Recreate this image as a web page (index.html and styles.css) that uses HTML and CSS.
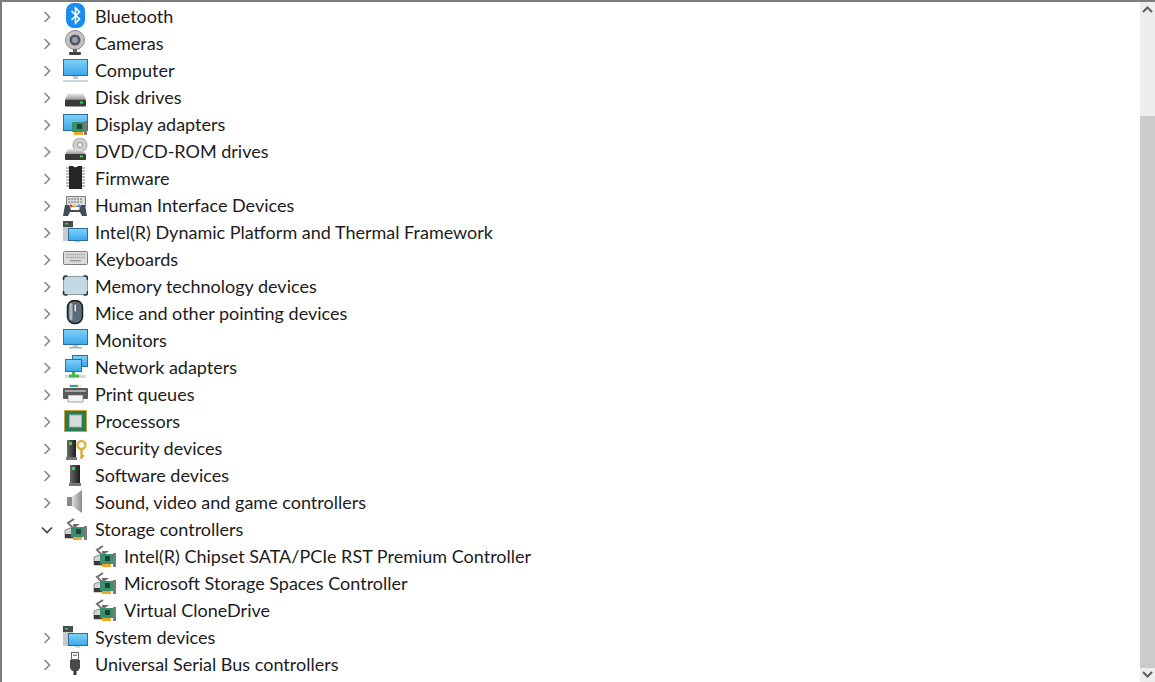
FILE: index.html
```html
<!DOCTYPE html>
<html lang="en">
<head>
<meta charset="utf-8">
<title>Device Manager</title>
<link rel="stylesheet" href="styles.css">
</head>
<body>
<svg class="sprite" width="0" height="0" aria-hidden="true">
  <defs>
    <linearGradient id="sky" x1="0" y1="0" x2="0" y2="1"><stop offset="0" stop-color="#7fd2f7"/><stop offset="1" stop-color="#3ba6ec"/></linearGradient>
    <linearGradient id="metal" x1="0" y1="0" x2="0" y2="1"><stop offset="0" stop-color="#e8e8e8"/><stop offset="1" stop-color="#9c9c9c"/></linearGradient>
    <linearGradient id="tower" x1="0" y1="0" x2="1" y2="0"><stop offset="0" stop-color="#6a6a6a"/><stop offset="1" stop-color="#1c1c1c"/></linearGradient>
    <linearGradient id="cone" x1="0" y1="0" x2="1" y2="0"><stop offset="0" stop-color="#dcdcdc"/><stop offset="1" stop-color="#8c8c8c"/></linearGradient>
    <symbol id="c" viewBox="0 0 12 12"><path d="M3.500 1l5 5-5 5" fill="none" stroke="#8c8c8c" stroke-width="1.700"/></symbol>
    <symbol id="d" viewBox="0 0 12 12"><path d="M1 3.500l5 5 5-5" fill="none" stroke="#404040" stroke-width="1.700"/></symbol>
    <symbol id="i-bt" viewBox="0 0 26 26"><rect x="4" y="0" width="19" height="25" rx="8" fill="#1a8cf0"/><path d="M9.500 8l8 8-4 4V5l4 4-8 8" fill="none" stroke="#fff" stroke-width="1.600"/></symbol>
    <symbol id="i-cam" viewBox="0 0 26 26"><circle cx="13" cy="10" r="9.500" fill="#c4c4c4" stroke="#8a8a8a"/><circle cx="13" cy="10" r="5.500" fill="#555"/><circle cx="13" cy="10" r="3" fill="#8fa3b6"/><rect x="11" y="19" width="4" height="3" fill="#666"/><rect x="7" y="22" width="12" height="3" rx="1" fill="#444"/></symbol>
    <symbol id="i-pc" viewBox="0 0 26 26"><rect x="1.500" y="2.500" width="24" height="16" fill="url(#sky)" stroke="#2a6f9e"/><rect x="11" y="19" width="5" height="3" fill="#b9cbd8"/><rect x="1" y="23" width="25" height="2" fill="#c8d4dd"/></symbol>
    <symbol id="i-mon" viewBox="0 0 26 26"><rect x="1.500" y="2.500" width="24" height="15" fill="url(#sky)" stroke="#2a6f9e"/><rect x="11" y="18" width="5" height="2" fill="#b9cbd8"/><rect x="7" y="20" width="13" height="1.500" fill="#9fb3c2"/></symbol>
    <symbol id="i-disk" viewBox="0 0 26 26"><path d="M6 9.500h15l3 6H3z" fill="url(#metal)"/><rect x="3" y="15.500" width="21" height="7" rx="1" fill="#3a3a3a"/><rect x="18" y="17.500" width="3" height="2" fill="#3fd34f"/></symbol>
    <symbol id="i-card" viewBox="0 0 26 26"><rect x="1.500" y="3.500" width="24" height="16" fill="url(#sky)" stroke="#2a6f9e"/><rect x="10" y="11" width="15" height="10" fill="#3b8f6d"/><rect x="15" y="13" width="5" height="5" fill="#1d4534"/><rect x="12" y="21" width="9" height="3" fill="#e8a92c"/><rect x="22" y="10" width="3" height="14" fill="#7a7a7a"/></symbol>
    <symbol id="i-dvd" viewBox="0 0 26 26"><circle cx="18" cy="7" r="7" fill="#cfcfcf" stroke="#a5a5a5"/><circle cx="18" cy="7" r="2.500" fill="#efefef" stroke="#999"/><path d="M6 11h11l7 5H3z" fill="url(#metal)"/><rect x="3" y="16" width="21" height="6" rx="1" fill="#3a3a3a"/><rect x="18" y="17.500" width="3" height="2" fill="#3fd34f"/></symbol>
    <symbol id="i-chip" viewBox="0 0 26 26"><path d="M7 1h4a3 3 0 0 0 5 0h4v23H7z" fill="#262626"/><path d="M4 3h3M4 6h3M4 9h3M4 12h3M4 15h3M4 18h3M4 21h3M20 3h3M20 6h3M20 9h3M20 12h3M20 15h3M20 18h3M20 21h3" stroke="#a8a8a8" stroke-width="1.500"/></symbol>
    <symbol id="i-hid" viewBox="0 0 26 26"><rect x="4.500" y="4.500" width="19" height="10" fill="#dcdcdc" stroke="#808080"/><path d="M6 7h15M6 10h15" stroke="#8e8e8e" stroke-width="1.300" stroke-dasharray="2 1"/><path d="M3 13h4l2 5h8l2-5h4l2 11h-5l-2-4h-10l-2 4H1z" fill="#454c55"/><circle cx="9" cy="14" r="1.500" fill="#e34b3a"/><circle cx="13" cy="14" r="1.500" fill="#f2c230"/><circle cx="17" cy="14" r="1.500" fill="#2f8fe0"/></symbol>
    <symbol id="i-sys" viewBox="0 0 26 26"><rect x="1" y="2" width="10" height="20" fill="#c9c9c9"/><rect x="1" y="2" width="10" height="6" fill="#4a4a4a"/><rect x="3" y="4" width="3" height="1.500" fill="#3fd34f"/><rect x="6.500" y="9.500" width="19" height="12" fill="url(#sky)" stroke="#2a6f9e"/><rect x="13" y="22" width="5" height="1.500" fill="#b9cbd8"/></symbol>
    <symbol id="i-kbd" viewBox="0 0 26 26"><rect x="1.500" y="5.500" width="24" height="13" rx="1" fill="#dcdcdc" stroke="#7c7c7c"/><path d="M4 8.500h19M4 11.500h19" stroke="#a0a0a0" stroke-width="1.500" stroke-dasharray="1.500 .7"/><rect x="8" y="14" width="11" height="1.500" fill="#9a9a9a"/></symbol>
    <symbol id="i-mem" viewBox="0 0 26 26"><rect x="1.500" y="3.500" width="24" height="18" rx="3" fill="#c5d8e6" stroke="#8da0ad"/><path d="M1.500 7V5a2 2 0 0 1 2-2h2M21.500 3h2a2 2 0 0 1 2 2v2M1.500 18v2a2 2 0 0 0 2 2h2M21.500 22h2a2 2 0 0 0 2-2v-2" fill="none" stroke="#333" stroke-width="1.600"/></symbol>
    <symbol id="i-mouse" viewBox="0 0 26 26"><rect x="5.500" y="0.500" width="15" height="23" rx="7" fill="#5d6b78" stroke="#1c1c1c" stroke-width="1.500"/><rect x="7.500" y="3" width="3" height="17" rx="1.500" fill="#a9bac8"/><rect x="12" y="4" width="2.500" height="8" rx="1.200" fill="#e0e6ea" stroke="#222" stroke-width=".5"/></symbol>
    <symbol id="i-net" viewBox="0 0 26 26"><rect x="10.500" y="1.500" width="15" height="11" fill="url(#sky)" stroke="#2a6f9e"/><rect x="3.500" y="5.500" width="16" height="12" fill="url(#sky)" stroke="#2a6f9e"/><rect x="3" y="21" width="21" height="3" fill="#d2dcd2"/><path d="M11.500 18v3" stroke="#4bb54f" stroke-width="3"/><rect x="7" y="20.500" width="10" height="3" fill="#4bb54f"/></symbol>
    <symbol id="i-print" viewBox="0 0 26 26"><rect x="7" y="3" width="13" height="5" fill="#eee"/><path d="M8 5h4" stroke="#2f8fe0" stroke-width="2"/><path d="M12 5h4" stroke="#3fb34f" stroke-width="2"/><rect x="1" y="7" width="25" height="11" rx="1" fill="#5a5a5a"/><rect x="3" y="9" width="21" height="2" fill="#a5a5a5"/><path d="M6 14h15v7H6z" fill="#f5f5f5" stroke="#777" stroke-width=".7"/></symbol>
    <symbol id="i-cpu" viewBox="0 0 26 26"><rect x="2" y="2" width="23" height="22" fill="#c9a23a"/><rect x="3" y="3" width="21" height="20" fill="#2d7a52"/><rect x="7.500" y="7" width="12" height="12" fill="#d8dcd8" stroke="#9ab09e"/></symbol>
    <symbol id="i-tower" viewBox="0 0 26 26"><rect x="8" y="3" width="10" height="18" rx=".5" fill="url(#tower)"/><rect x="10" y="5" width="3" height="3" fill="#3fd34f"/><rect x="7" y="21" width="12" height="3" fill="#777"/></symbol>
    <symbol id="i-sec" viewBox="0 0 26 26"><rect x="5" y="5" width="9" height="17" rx=".5" fill="url(#tower)"/><rect x="7" y="7" width="3" height="3" fill="#3fd34f"/><rect x="4" y="22" width="11" height="3" fill="#777"/><circle cx="19.500" cy="10" r="4" fill="none" stroke="#e0b040" stroke-width="2.400"/><path d="M19.500 14v10M19.500 21h2.500" stroke="#d8a52f" stroke-width="2.200"/></symbol>
    <symbol id="i-sound" viewBox="0 0 26 26"><rect x="5" y="8" width="5" height="9" fill="#8a8a8a"/><path d="M10 8l10-7v23l-10-7z" fill="url(#cone)"/></symbol>
    <symbol id="i-store" viewBox="0 0 26 26"><path d="M12 3L6 7l5 5 4-3h-4" fill="none" stroke="#707070" stroke-width="2"/><path d="M3 14l5-2 7 4v6H3z" fill="#d4d4d4" stroke="#666" stroke-width=".7"/><rect x="3" y="18" width="9" height="4" fill="#3a3a3a"/><rect x="9" y="11" width="15" height="10" fill="#3b8f6d"/><rect x="14" y="13" width="5" height="5" fill="#1d4534"/><rect x="11" y="21" width="9" height="3" fill="#e8a92c"/><rect x="22" y="10" width="3" height="14" fill="#7a7a7a"/></symbol>
    <symbol id="i-usb" viewBox="0 0 26 26"><rect x="9.500" y="1.500" width="7" height="7" fill="#fff" stroke="#666"/><rect x="11.300" y="3.500" width="1.300" height="1.500" fill="#555"/><rect x="13.400" y="3.500" width="1.300" height="1.500" fill="#555"/><path d="M8 9h10v8l-2 3h-6l-2-3z" fill="#4a4a4a"/><rect x="11.500" y="20" width="3" height="4" fill="#333"/></symbol>
  </defs>
</svg>

<main class="window">
  <ul class="tree">
    <li class="row"><svg class="chev"><use href="#c"/></svg><svg class="icon"><use href="#i-bt"/></svg><span>Bluetooth</span></li>
    <li class="row"><svg class="chev"><use href="#c"/></svg><svg class="icon"><use href="#i-cam"/></svg><span>Cameras</span></li>
    <li class="row"><svg class="chev"><use href="#c"/></svg><svg class="icon"><use href="#i-pc"/></svg><span>Computer</span></li>
    <li class="row"><svg class="chev"><use href="#c"/></svg><svg class="icon"><use href="#i-disk"/></svg><span>Disk drives</span></li>
    <li class="row"><svg class="chev"><use href="#c"/></svg><svg class="icon"><use href="#i-card"/></svg><span>Display adapters</span></li>
    <li class="row"><svg class="chev"><use href="#c"/></svg><svg class="icon"><use href="#i-dvd"/></svg><span>DVD/CD-ROM drives</span></li>
    <li class="row"><svg class="chev"><use href="#c"/></svg><svg class="icon"><use href="#i-chip"/></svg><span>Firmware</span></li>
    <li class="row"><svg class="chev"><use href="#c"/></svg><svg class="icon"><use href="#i-hid"/></svg><span>Human Interface Devices</span></li>
    <li class="row"><svg class="chev"><use href="#c"/></svg><svg class="icon"><use href="#i-sys"/></svg><span>Intel(R) Dynamic Platform and Thermal Framework</span></li>
    <li class="row"><svg class="chev"><use href="#c"/></svg><svg class="icon"><use href="#i-kbd"/></svg><span>Keyboards</span></li>
    <li class="row"><svg class="chev"><use href="#c"/></svg><svg class="icon"><use href="#i-mem"/></svg><span>Memory technology devices</span></li>
    <li class="row"><svg class="chev"><use href="#c"/></svg><svg class="icon"><use href="#i-mouse"/></svg><span>Mice and other pointing devices</span></li>
    <li class="row"><svg class="chev"><use href="#c"/></svg><svg class="icon"><use href="#i-mon"/></svg><span>Monitors</span></li>
    <li class="row"><svg class="chev"><use href="#c"/></svg><svg class="icon"><use href="#i-net"/></svg><span>Network adapters</span></li>
    <li class="row"><svg class="chev"><use href="#c"/></svg><svg class="icon"><use href="#i-print"/></svg><span>Print queues</span></li>
    <li class="row"><svg class="chev"><use href="#c"/></svg><svg class="icon"><use href="#i-cpu"/></svg><span>Processors</span></li>
    <li class="row"><svg class="chev"><use href="#c"/></svg><svg class="icon"><use href="#i-sec"/></svg><span>Security devices</span></li>
    <li class="row"><svg class="chev"><use href="#c"/></svg><svg class="icon"><use href="#i-tower"/></svg><span>Software devices</span></li>
    <li class="row"><svg class="chev"><use href="#c"/></svg><svg class="icon"><use href="#i-sound"/></svg><span>Sound, video and game controllers</span></li>
    <li class="row"><svg class="chev"><use href="#d"/></svg><svg class="icon"><use href="#i-store"/></svg><span>Storage controllers</span></li>
    <li class="row child"><svg class="icon"><use href="#i-store"/></svg><span>Intel(R) Chipset SATA/PCIe RST Premium Controller</span></li>
    <li class="row child"><svg class="icon"><use href="#i-store"/></svg><span>Microsoft Storage Spaces Controller</span></li>
    <li class="row child"><svg class="icon"><use href="#i-store"/></svg><span>Virtual CloneDrive</span></li>
    <li class="row"><svg class="chev"><use href="#c"/></svg><svg class="icon"><use href="#i-sys"/></svg><span>System devices</span></li>
    <li class="row"><svg class="chev"><use href="#c"/></svg><svg class="icon"><use href="#i-usb"/></svg><span>Universal Serial Bus controllers</span></li>
  </ul>
  <div class="scrollbar">
    <div class="arrow"><svg width="15" height="10" viewBox="0 0 15 10"><path d="M3 8l4.500-4.500L12 8" fill="none" stroke="#5f5f5f" stroke-width="2"/></svg></div>
    <div class="gap"></div>
    <div class="thumb"></div>
    <div class="arrow"><svg width="15" height="10" viewBox="0 0 15 10"><path d="M3 2l4.500 4.500L12 2" fill="none" stroke="#5f5f5f" stroke-width="2"/></svg></div>
  </div>
</main>
</body>
</html>
```

FILE: styles.css
```css
* { box-sizing: border-box; }
html, body { margin: 0; height: 100%; overflow: hidden; background: #fff; }
.sprite { position: absolute; }
.window {
  display: flex;
  width: 1155px;
  height: 682px;
  border-top: 2px solid #7d7d7d;
  border-left: 2px solid #7d7d7d;
}
.tree {
  flex: 1;
  list-style: none;
  margin: 0;
  padding: 1px 0 0 39px;
  overflow: hidden;
}
.row {
  display: flex;
  align-items: center;
  height: 27px;
  font: 18px/27px Lato, "Noto Sans", sans-serif;
  color: #1c1c1c;
  white-space: nowrap;
}
.chev { width: 12px; height: 12px; margin-right: 9px; flex: none; }
.icon { width: 26px; height: 26px; margin-right: 7px; flex: none; align-self: flex-start; }
.child { padding-left: 50px; }
.scrollbar {
  display: flex;
  flex-direction: column;
  flex: none;
  width: 15px;
  background: #eeeeee;
}
.arrow { height: 14px; display: flex; align-items: center; flex: none; }
.gap { height: 100px; flex: none; }
.thumb { flex: 1; background: #cccccc; }
```
